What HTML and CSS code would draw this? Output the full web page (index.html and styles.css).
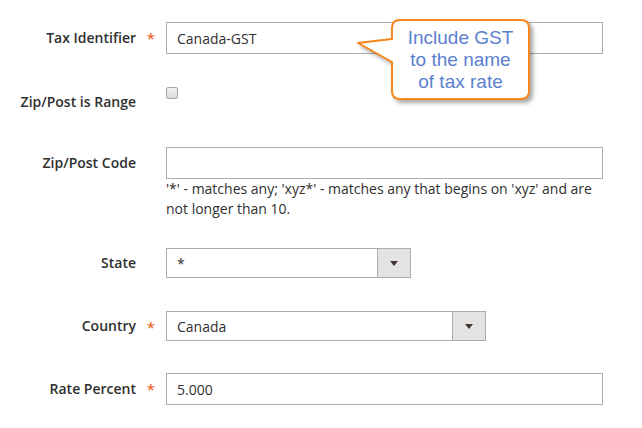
FILE: index.html
```html
<!DOCTYPE html>
<html lang="en">
<head>
    <meta charset="UTF-8">
    <meta name="viewport" content="width=device-width, initial-scale=1.0">
    <title>Tax Rate</title>
    <link rel="stylesheet" href="styles.css">
</head>
<body>
    <form class="rate-form">
        <div class="field">
            <label class="field-label" for="code">Tax Identifier</label>
            <span class="field-req">*</span>
            <div class="control">
                <input type="text" id="code" class="input-text" value="Canada-GST">
            </div>
        </div>

        <div class="field field-check">
            <label class="field-label" for="zip_is_range">Zip/Post is Range</label>
            <span class="field-req"></span>
            <div class="control">
                <input type="checkbox" id="zip_is_range" class="checkbox">
            </div>
        </div>

        <div class="field field-zip">
            <label class="field-label" for="postcode">Zip/Post Code</label>
            <span class="field-req"></span>
            <div class="control">
                <input type="text" id="postcode" class="input-text" value="">
                <div class="field-note">'*' - matches any; 'xyz*' - matches any that begins on 'xyz' and are not longer than 10.</div>
            </div>
        </div>

        <div class="field field-select">
            <label class="field-label" for="region">State</label>
            <span class="field-req"></span>
            <div class="control">
                <div class="select-wrap select-state">
                    <select id="region" class="select">
                        <option>*</option>
                    </select>
                    <span class="select-btn"><i class="arrow"></i></span>
                </div>
            </div>
        </div>

        <div class="field field-select field-country">
            <label class="field-label" for="country">Country</label>
            <span class="field-req">*</span>
            <div class="control">
                <div class="select-wrap select-country">
                    <select id="country" class="select">
                        <option>Canada</option>
                    </select>
                    <span class="select-btn"><i class="arrow"></i></span>
                </div>
            </div>
        </div>

        <div class="field">
            <label class="field-label" for="rate">Rate Percent</label>
            <span class="field-req">*</span>
            <div class="control">
                <input type="text" id="rate" class="input-text" value="5.000">
            </div>
        </div>
    </form>

    <div class="callout">
        <svg class="callout-shape" width="180" height="88" viewBox="0 0 180 88">
            <path d="M45,3 H166 Q174,3 174,11 V74 Q174,82 166,82 H45 Q37,82 37,74 V45 L3,26 L37,22 V11 Q37,3 45,3 Z"
                  fill="#fff" stroke="#f7861c" stroke-width="2" stroke-linejoin="round"/>
        </svg>
        <div class="callout-text">Include GST<br>to the name<br>of tax rate</div>
    </div>
</body>
</html>
```

FILE: styles.css
```css
* {
    box-sizing: border-box;
    margin: 0;
    padding: 0;
}

body {
    background-color: #fff;
    font-family: 'Open Sans', sans-serif;
    color: #303030;
    position: relative;
    width: 642px;
    height: 428px;
    overflow: hidden;
}

.rate-form {
    padding-top: 22px;
}

.field {
    display: flex;
    align-items: flex-start;
    margin-bottom: 33px;
}

.field-label {
    width: 136px;
    text-align: right;
    font-size: 14px;
    font-weight: 600;
    line-height: 32px;
    color: #303030;
}

.field-req {
    width: 30px;
    height: 32px;
    text-align: center;
    color: #eb5202;
    font-size: 15px;
    line-height: 33px;
    overflow: hidden;
}

.control {
    width: 437px;
}

.input-text {
    display: block;
    width: 100%;
    height: 32px;
    padding: 0 10px;
    border: 1px solid #adadad;
    border-radius: 0;
    font-family: 'Open Sans', sans-serif;
    font-size: 14px;
    color: #303030;
    outline: none;
}

/* checkbox row */
.field-check {
    margin-bottom: 35px;
}

.field-check .field-label {
    line-height: 20px;
    padding-top: 5px;
}

.field-check .field-req {
    height: 12px;
}

.checkbox {
    appearance: none;
    display: block;
    width: 12px;
    height: 12px;
    border: 1px solid #a6a6a6;
    border-radius: 2px;
    background: linear-gradient(#f2f2f2, #dcdcdc);
}

.field-note {
    font-size: 14px;
    line-height: 20px;
    color: #303030;
}

.field-zip {
    margin-bottom: 29px;
}

/* select rows */
.field-select .field-label {
    line-height: 30px;
}

.field-select .field-req {
    height: 30px;
    line-height: 32px;
}

.field-country {
    margin-bottom: 32px;
}

.select-wrap {
    position: relative;
    height: 30px;
}

.select-state {
    width: 245px;
}

.select-country {
    width: 320px;
}

.select {
    appearance: none;
    display: block;
    width: 100%;
    height: 30px;
    padding: 0 10px;
    border: 1px solid #adadad;
    border-radius: 0;
    background: #fff;
    font-family: 'Open Sans', sans-serif;
    font-size: 14px;
    color: #303030;
    outline: none;
}

.select-btn {
    position: absolute;
    top: 0;
    right: 0;
    width: 34px;
    height: 30px;
    border: 1px solid #adadad;
    background-color: #e3e3e3;
    display: flex;
    align-items: center;
    justify-content: center;
}

.arrow {
    display: block;
    width: 0;
    height: 0;
    border-left: 4px solid transparent;
    border-right: 4px solid transparent;
    border-top: 5px solid #41362f;
    margin-top: 1px;
}

/* callout over the form */
.callout {
    position: absolute;
    left: 355px;
    top: 17px;
    width: 180px;
    height: 88px;
}

.callout-shape {
    display: block;
    filter: drop-shadow(3px 3px 2px rgba(0, 0, 0, 0.35));
}

.callout-text {
    position: absolute;
    left: 37px;
    top: 10px;
    width: 137px;
    text-align: center;
    font-family: 'Liberation Sans', Arial, sans-serif;
    font-size: 19px;
    line-height: 22px;
    color: #5b7fd0;
}
```
